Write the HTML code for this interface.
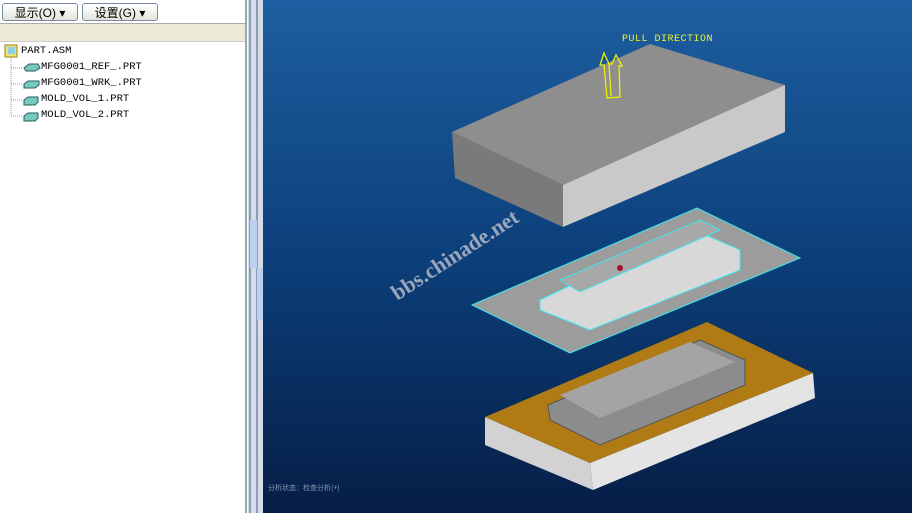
<!DOCTYPE html>
<html><head><meta charset="utf-8"><style>
body{margin:0;width:912px;height:513px;overflow:hidden;position:relative;font-family:"Liberation Mono","Noto Sans CJK SC",monospace;background:#fff}
.btn{position:absolute;top:3px;height:18px;border:1px solid #7a8aa0;border-radius:3px;background:linear-gradient(#fff,#e4e4dc);font:12px "Liberation Sans","Noto Sans CJK SC",sans-serif;line-height:18px;text-align:center;box-sizing:border-box}
.tree{position:absolute;font-size:10.5px;color:#000;line-height:16px}
</style></head><body>
<div style="position:absolute;left:0;top:0;width:248px;height:513px;background:#fff;border-right:1px solid #aab"></div>
<div class="btn" style="left:2px;width:76px">显示(O) ▾</div>
<div class="btn" style="left:82px;width:76px">设置(G) ▾</div>
<div style="position:absolute;left:0;top:23px;width:246px;height:17px;background:#ece9d8;border-top:1px solid #aaa;border-bottom:1px solid #ccc"></div>
<div style="position:absolute;left:245px;top:0;width:2px;height:513px;background:#9aa"></div>
<div style="position:absolute;left:248px;top:0;width:15px;height:513px;background:#d6dbe8"></div>
<div style="position:absolute;left:249px;top:0;width:2px;height:513px;background:#8f9cb8"></div>
<div style="position:absolute;left:256px;top:0;width:2px;height:513px;background:#8f9cb8"></div>
<div style="position:absolute;left:250px;top:220px;width:7px;height:48px;background:#bcd0f0"></div>
<div style="position:absolute;left:257px;top:268px;width:6px;height:52px;background:#bcd0f0"></div>
<svg style="position:absolute;left:0;top:42px" width="245" height="90">
<rect x="5" y="3" width="12" height="12" fill="#f0e070" stroke="#a08020"/><rect x="8" y="5" width="7" height="7" fill="#8ad0e0"/>
<path d="M11 16V74M11 26h12M11 42h12M11 58h12M11 74h12" stroke="#999" stroke-dasharray="1 1" fill="none"/>
<g fill="#7ac8c0" stroke="#206060"><path d="M24 26l5-4h9l2 4-5 3h-9z"/><path d="M24 42l4-3h11v4l-4 3H24z"/><path d="M24 58l4-3h10v5l-3 3H24z"/><path d="M24 74l4-3h10v5l-3 3H24z"/></g>
</svg>
<div class="tree" style="left:21px;top:43px">PART.ASM</div>
<div class="tree" style="left:41px;top:59px">MFG0001_REF_.PRT</div>
<div class="tree" style="left:41px;top:75px">MFG0001_WRK_.PRT</div>
<div class="tree" style="left:41px;top:91px">MOLD_VOL_1.PRT</div>
<div class="tree" style="left:41px;top:107px">MOLD_VOL_2.PRT</div>
<svg style="position:absolute;left:263px;top:0" width="649" height="513" viewBox="263 0 649 513">
<defs><linearGradient id="g" x1="0" y1="0" x2="0" y2="1"><stop offset="0" stop-color="#1d5fa0"/><stop offset="0.5" stop-color="#0c3f7a"/><stop offset="1" stop-color="#061e46"/></linearGradient></defs>
<rect x="263" y="0" width="649" height="513" fill="url(#g)"/>
<polygon points="452,132 650,44 785,85 563,185" fill="#8e8e8e"/>
<polygon points="452,132 563,185 563,227 455,178" fill="#7a7a7a"/>
<polygon points="563,185 785,85 785,132 563,227" fill="#c9c9c9"/>
<path d="M607,98 L604,65 L600,65 L604,53 L609,64 L612,64 L616,55 L622,66 L619,66 L620,97 Z M609,64 L611,96" fill="none" stroke="#f0f000" stroke-width="1.3"/>
<text x="622" y="41" fill="#f0f030" font-size="10" font-family="Liberation Mono,monospace" letter-spacing="0.5">PULL DIRECTION</text>
<polygon points="472,305 697,208 800,258 570,353" fill="#9c9c9c" stroke="#40e8f0"/>
<polygon points="540,300 690,228 740,250 740,270 590,330 540,310" fill="#d8d8d8" stroke="#40e8f0"/>
<polygon points="560,280 700,220 720,230 580,292" fill="#a8a8a8" stroke="#40e8f0"/>
<circle cx="620" cy="268" r="3" fill="#a01030"/>
<polygon points="485,445 485,417 590,463 593,490" fill="#d2d2d2"/>
<polygon points="590,463 813,373 815,398 593,490" fill="#e4e4e4"/>
<polygon points="485,417 707,322 813,373 590,463" fill="#b07a14"/>
<polygon points="548,405 700,340 745,360 745,385 600,445 550,420" fill="#8c8c8c" stroke="#555"/>
<polygon points="560,395 690,342 735,362 600,418" fill="#a4a4a4"/>
<text x="455" y="262" transform="rotate(-33 455 255)" text-anchor="middle" fill="#c8c8d0" fill-opacity="0.75" font-size="22" font-weight="bold" font-family="Liberation Serif,serif">bbs.chinade.net</text>
<text x="268" y="490" fill="#8898b8" font-size="7" font-family="Noto Sans CJK SC,sans-serif">分析状态：检查分析(+)</text>
</svg>
</body></html>
